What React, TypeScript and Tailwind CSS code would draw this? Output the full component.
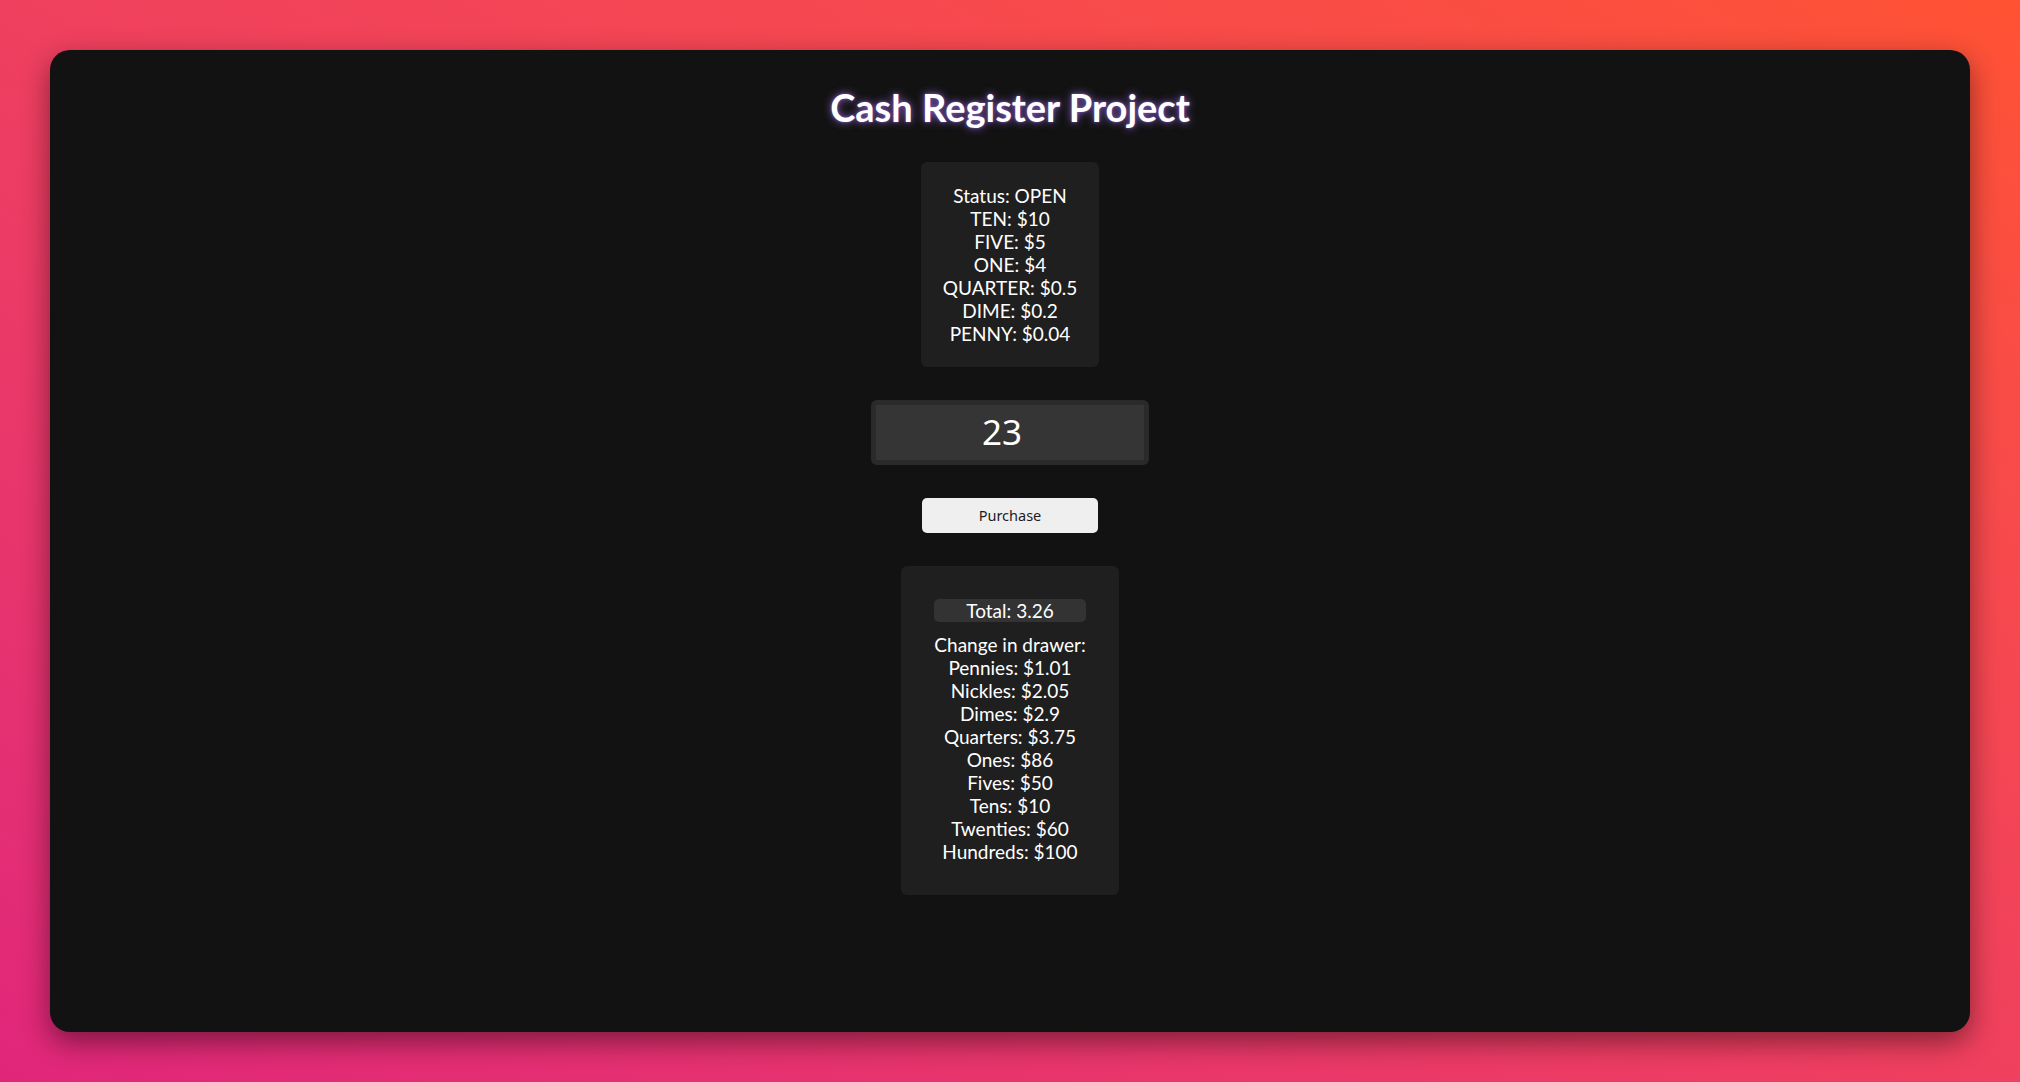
import React from "react";

const drawer = [
  "Status: OPEN",
  "TEN: $10",
  "FIVE: $5",
  "ONE: $4",
  "QUARTER: $0.5",
  "DIME: $0.2",
  "PENNY: $0.04",
];

const change = [
  "Change in drawer:",
  "Pennies: $1.01",
  "Nickles: $2.05",
  "Dimes: $2.9",
  "Quarters: $3.75",
  "Ones: $86",
  "Fives: $50",
  "Tens: $10",
  "Twenties: $60",
  "Hundreds: $100",
];

export default function App() {
  return (
    <div className="w-[2020px] h-[1082px] p-[50px] bg-linear-to-tr from-[#e0267a] to-[#ff5233] font-['Lato',sans-serif]">
      <div className="w-full h-full rounded-[20px] bg-[#121212] shadow-[0_10px_28px_rgba(0,0,0,0.45)] flex flex-col items-center text-white">
        <h1 className="mt-[35px] mb-[1px] text-[38px] leading-[44px] font-bold text-white [text-shadow:0_0_8px_#8a62c8,0_0_3px_#6b4aa0]">
          Cash Register Project
        </h1>
        <div className="mt-[32px] w-[178px] py-[22px] rounded-[6px] bg-[#1f1f1f] text-center text-[19px] leading-[23px]">
          {drawer.map((l) => (
            <div key={l}>{l}</div>
          ))}
        </div>
        <div className="mt-[33px] w-[278px] h-[65px] rounded-[6px] bg-[#2a2a2a] p-[5px]">
          <div className="w-full h-full bg-[#353535] flex items-center justify-center pr-[16px] font-['Noto_Sans',sans-serif] text-[35px] text-white">
            23
          </div>
        </div>
        <button className="mt-[33px] w-[176px] h-[35px] rounded-[5px] bg-[#efefef] text-[#1c1c1c] text-[14.5px] font-['Noto_Sans',sans-serif]">
          Purchase
        </button>
        <div className="mt-[33px] w-[218px] px-[33px] pt-[33px] pb-[32px] rounded-[6px] bg-[#1f1f1f] text-center text-[19px] leading-[23px]">
          <div className="h-[23px] rounded-[5px] bg-[#333333] mb-[11px]">Total: 3.26</div>
          {change.map((l) => (
            <div key={l}>{l}</div>
          ))}
        </div>
      </div>
    </div>
  );
}
